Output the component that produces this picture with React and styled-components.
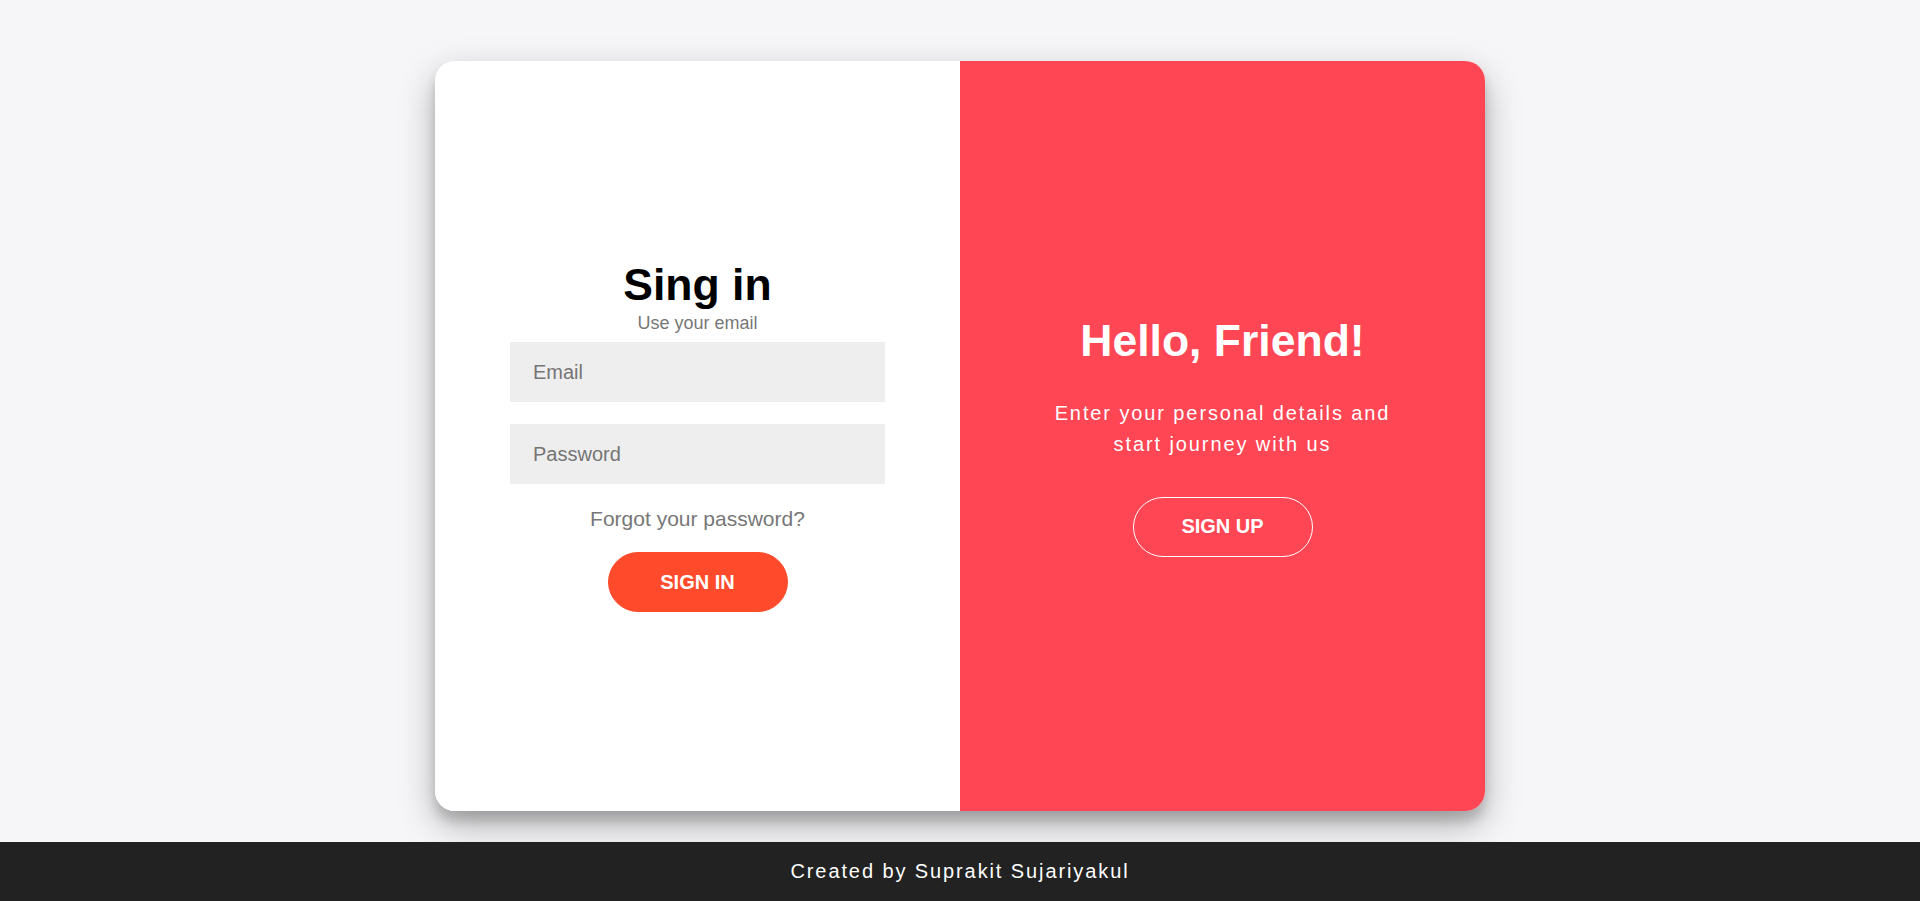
import React from "react";
import styled, { createGlobalStyle } from "styled-components";

const GlobalStyle = createGlobalStyle`
  * { box-sizing: border-box; }
  html, body { margin: 0; padding: 0; }
  body {
    background: #f6f5f7;
    font-family: "Liberation Sans", Arial, sans-serif;
  }
`;

const Page = styled.div`
  min-height: 100vh;
  display: flex;
  flex-direction: column;
`;

const Main = styled.main`
  flex: 1;
  display: flex;
  justify-content: center;
  align-items: flex-start;
  padding-top: 61px;
`;

const Card = styled.div`
  width: 1050px;
  height: 750px;
  display: flex;
  border-radius: 20px;
  overflow: hidden;
  background: #fff;
  box-shadow: 0 14px 36px rgba(0, 0, 0, 0.28), 0 10px 12px rgba(0, 0, 0, 0.16);
`;

const Panel = styled.section`
  flex: 1;
  display: flex;
  flex-direction: column;
  align-items: center;
  justify-content: center;
  text-align: center;
  background: ${(p) => (p.$accent ? "#ff4654" : "#ffffff")};
  color: ${(p) => (p.$accent ? "#ffffff" : "#000000")};
`;

const Form = styled.form`
  width: 375px;
  display: flex;
  flex-direction: column;
  align-items: center;
`;

const Title = styled.h1`
  margin: 0;
  font-size: 44.5px;
  font-weight: bold;
  line-height: normal;
`;

const Hint = styled.span`
  margin: 3px 0 -3px;
  font-size: 18px;
  color: #777;
`;

const Input = styled.input`
  width: 100%;
  height: 60px;
  margin: 11px 0;
  padding: 0 23px;
  border: none;
  outline: none;
  background: #eee;
  font-family: inherit;
  font-size: 20px;
  color: #333;
  &::placeholder { color: #757575; }
`;

const Forgot = styled.a`
  margin-top: 12px;
  font-size: 21px;
  color: #777;
  text-decoration: none;
  cursor: pointer;
`;

const Button = styled.button`
  width: 180px;
  height: 60px;
  border-radius: 30px;
  border: 1px solid ${(p) => (p.$ghost ? "#ffffff" : "#ff4b2b")};
  background: ${(p) => (p.$ghost ? "transparent" : "#ff4b2b")};
  color: #fff;
  font-family: inherit;
  font-size: 20px;
  font-weight: bold;
  text-transform: uppercase;
  cursor: pointer;
  margin-top: ${(p) => (p.$ghost ? "0" : "21px")};
`;

const Lead = styled.p`
  width: 360px;
  margin: 32px 0 37px;
  font-size: 20px;
  line-height: 31px;
  letter-spacing: 1.9px;
`;

const Footer = styled.footer`
  height: 59px;
  background: #222;
  color: #fff;
  display: flex;
  align-items: center;
  justify-content: center;
  font-size: 20px;
  letter-spacing: 1.9px;
`;

export default function App() {
  return (
    <>
      <GlobalStyle />
      <Page>
        <Main>
          <Card>
            <Panel>
              <Form onSubmit={(e) => e.preventDefault()}>
                <Title>Sing in</Title>
                <Hint>Use your email</Hint>
                <Input type="email" placeholder="Email" />
                <Input type="password" placeholder="Password" />
                <Forgot>Forgot your password?</Forgot>
                <Button type="submit">Sign In</Button>
              </Form>
            </Panel>
            <Panel $accent>
              <Title>Hello, Friend!</Title>
              <Lead>Enter your personal details and start journey with us</Lead>
              <Button $ghost type="button">Sign Up</Button>
            </Panel>
          </Card>
        </Main>
        <Footer>Created by Suprakit Sujariyakul</Footer>
      </Page>
    </>
  );
}
